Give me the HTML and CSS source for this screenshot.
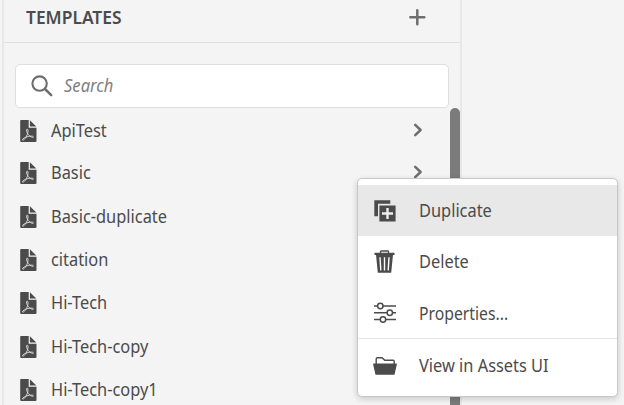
FILE: index.html
```html
<!DOCTYPE html>
<html lang="en">
<head>
<meta charset="utf-8">
<title>Templates</title>
<link rel="stylesheet" href="styles.css">
</head>
<body>
<svg class="defs" aria-hidden="true">
  <symbol id="pdf" viewBox="0 0 17 22">
    <path fill="#4b4b4b" d="M1 0H8.7V7.8H16.5V21Q16.5 22 15.5 22H1.2Q.2 22 .2 21V1Q.2 0 1 0ZM9.9.2 16.3 6.6H9.9Z"/>
    <path fill="none" stroke="#eee" stroke-width=".8" d="M7.2 9.2C5.9 9.2 6.5 12 8.1 14.3 9.6 16.4 12.9 18.2 13.4 17 13.7 15.7 9.2 15.8 5.8 17.2 2.4 18.6 1.8 20.3 3 20.2 4.6 20 7.4 15.5 7.9 12.3 8.2 10.4 8 9.2 7.2 9.2Z"/>
  </symbol>
  <symbol id="chevron" viewBox="0 0 10 14"><path fill="none" stroke="#6e6e6e" stroke-width="2.5" stroke-linecap="round" stroke-linejoin="round" d="M2.2 1.8 7.6 7 2.2 12.2"/></symbol>
</svg>
<div class="panel">
  <header class="header">
    <h1 class="title">TEMPLATES</h1>
    <svg class="plus" viewBox="0 0 17 17"><path fill="none" stroke="#6e6e6e" stroke-width="2.5" stroke-linecap="round" d="M8.3 1.3V15.3M1.3 8.3H15.3"/></svg>
  </header>
  <div class="search">
    <svg class="magnifier" viewBox="0 0 22 22"><circle cx="8.6" cy="8.6" r="7.2" fill="none" stroke="#6e6e6e" stroke-width="2.1"/><path d="M14 14 20.2 20.2" stroke="#6e6e6e" stroke-width="2.5" stroke-linecap="round"/></svg>
    <span class="placeholder">Search</span>
  </div>
  <div class="body">
    <ul class="list">
      <li class="item"><svg class="file"><use href="#pdf"/></svg><span class="label">ApiTest</span><svg class="chevron"><use href="#chevron"/></svg></li>
      <li class="item"><svg class="file"><use href="#pdf"/></svg><span class="label">Basic</span><svg class="chevron"><use href="#chevron"/></svg></li>
      <li class="item"><svg class="file"><use href="#pdf"/></svg><span class="label">Basic-duplicate</span></li>
      <li class="item"><svg class="file"><use href="#pdf"/></svg><span class="label">citation</span></li>
      <li class="item"><svg class="file"><use href="#pdf"/></svg><span class="label">Hi-Tech</span></li>
      <li class="item"><svg class="file"><use href="#pdf"/></svg><span class="label">Hi-Tech-copy</span></li>
      <li class="item"><svg class="file"><use href="#pdf"/></svg><span class="label">Hi-Tech-copy1</span></li>
    </ul>
    <div class="scrollbar"></div>
  </div>
</div>
<div class="menu">
  <div class="option active">
    <svg class="icon" viewBox="0 0 24 24"><path fill="#4b4b4b" d="M1.3 1.2H17.3V4.8H5V17.3H1.3ZM6.4 6.4H22.6V22.6H6.4Z"/><path stroke="#eee" stroke-width="2.4" d="M14.5 9V20M9 14.5H20"/></svg>
    <span class="label">Duplicate</span>
  </div>
  <div class="option">
    <svg class="icon" viewBox="0 0 24 24"><path fill="none" stroke="#4b4b4b" stroke-width="1.3" d="M7.5 3V1.7Q7.5 1 8.2 1H14.8Q15.5 1 15.5 1.7V3"/><path fill="#4b4b4b" d="M1.5 2.7H21.5V5H1.5ZM3 4.8H20L18.2 22.8H4.8Z"/><path stroke="#fff" stroke-width="1.4" d="M7 7.3 7.8 20.4M11.5 7.3V20.4M16 7.3 15.2 20.4"/></svg>
    <span class="label">Delete</span>
  </div>
  <div class="option">
    <svg class="icon" viewBox="0 0 24 24"><path stroke="#4b4b4b" stroke-width="1.5" d="M1 5H23M1 11.8H23M1 18.5H23"/><g fill="#fff" stroke="#4b4b4b" stroke-width="1.5"><circle cx="7.3" cy="5" r="2.7"/><circle cx="16.8" cy="11.8" r="2.7"/><circle cx="10" cy="18.5" r="2.7"/></g></svg>
    <span class="label tight">Properties...</span>
  </div>
  <div class="option separated">
    <svg class="icon" viewBox="0 0 24 24"><path fill="none" stroke="#4b4b4b" stroke-width="1.4" d="M3.2 11V5Q3.2 3.7 4.5 3.7H9L11.8 6.3H20Q21.2 6.3 21.2 7.5V11"/><path fill="#4b4b4b" d="M.7 9.6H23.3Q24 9.6 23.9 10.3L21.6 20.3Q21.5 20.8 20.8 20.8H3.2Q2.5 20.8 2.4 20.3L.1 10.3Q0 9.6.7 9.6Z"/></svg>
    <span class="label">View in Assets UI</span>
  </div>
</div>
</body>
</html>
```
FILE: styles.css
```css
* { box-sizing: border-box; }
body {
  margin: 0;
  height: 405px;
  overflow: hidden;
  background: #f4f4f4;
  color: #4b4b4b;
  font-family: "Noto Sans", sans-serif;
  font-size: 18px;
}
.defs { position: absolute; width: 0; height: 0; }
.panel {
  display: flex;
  flex-direction: column;
  width: 460px;
  height: 405px;
  margin-left: 2px;
  border-left: 2px solid #e8e8e8;
  border-right: 2px solid #e8e8e8;
}
.header {
  display: flex;
  flex: none;
  align-items: center;
  justify-content: space-between;
  height: 43px;
  padding: 0 34px 8px 22px;
  border-bottom: 1px solid #dedede;
}
.title {
  margin: 0 0 1px;
  font-size: 18px;
  font-weight: 600;
  line-height: 24px;
  transform: scaleX(.965);
  transform-origin: left;
}
.plus { width: 17px; height: 17px; }
.search {
  display: flex;
  flex: none;
  align-items: center;
  width: 434px;
  height: 44px;
  margin: 21px 0 0 11px;
  padding-left: 15px;
  background: #fff;
  border: 1px solid #dedede;
  border-radius: 5px;
}
.magnifier { width: 22px; height: 22px; margin-right: 11px; }
.placeholder {
  margin-bottom: 2px;
  color: #808080;
  font-style: italic;
  line-height: 24px;
  transform: scaleX(.92);
  transform-origin: left;
}
.body { display: flex; flex: 1; min-height: 0; }
.list {
  display: grid;
  flex: 1;
  grid-template-rows: 42px 44px 43px 43px 44px 43px 43px;
  align-items: start;
  margin: 0;
  padding: 1px 25px 0 16px;
  list-style: none;
}
.item { display: flex; align-items: center; height: 44px; }
.file { width: 17px; height: 22px; margin-right: 14px; }
.label {
  margin-bottom: 2px;
  line-height: 24px;
  white-space: nowrap;
  transform: scaleX(.91);
  transform-origin: left;
}
.tight { margin-bottom: 0; transform: scaleX(.875); }
.chevron { width: 10px; height: 14px; margin: -3px 2px 0 auto; }
.scrollbar {
  width: 10px;
  background: #7b7b7b;
  border-radius: 5px 5px 0 0;
}
.menu {
  position: absolute;
  top: 178px;
  left: 357px;
  width: 261px;
  height: 219px;
  padding-top: 6px;
  background: #fff;
  border: 1px solid #c8c8c8;
  border-radius: 5px;
  box-shadow: 0 2px 6px rgba(0, 0, 0, .18);
}
.option {
  display: flex;
  align-items: center;
  height: 51px;
  padding-left: 15px;
}
.active { background: #e8e8e8; }
.separated { height: 55px; border-top: 1px solid #e4e4e4; }
.icon { width: 24px; height: 24px; margin-right: 22px; }
```
